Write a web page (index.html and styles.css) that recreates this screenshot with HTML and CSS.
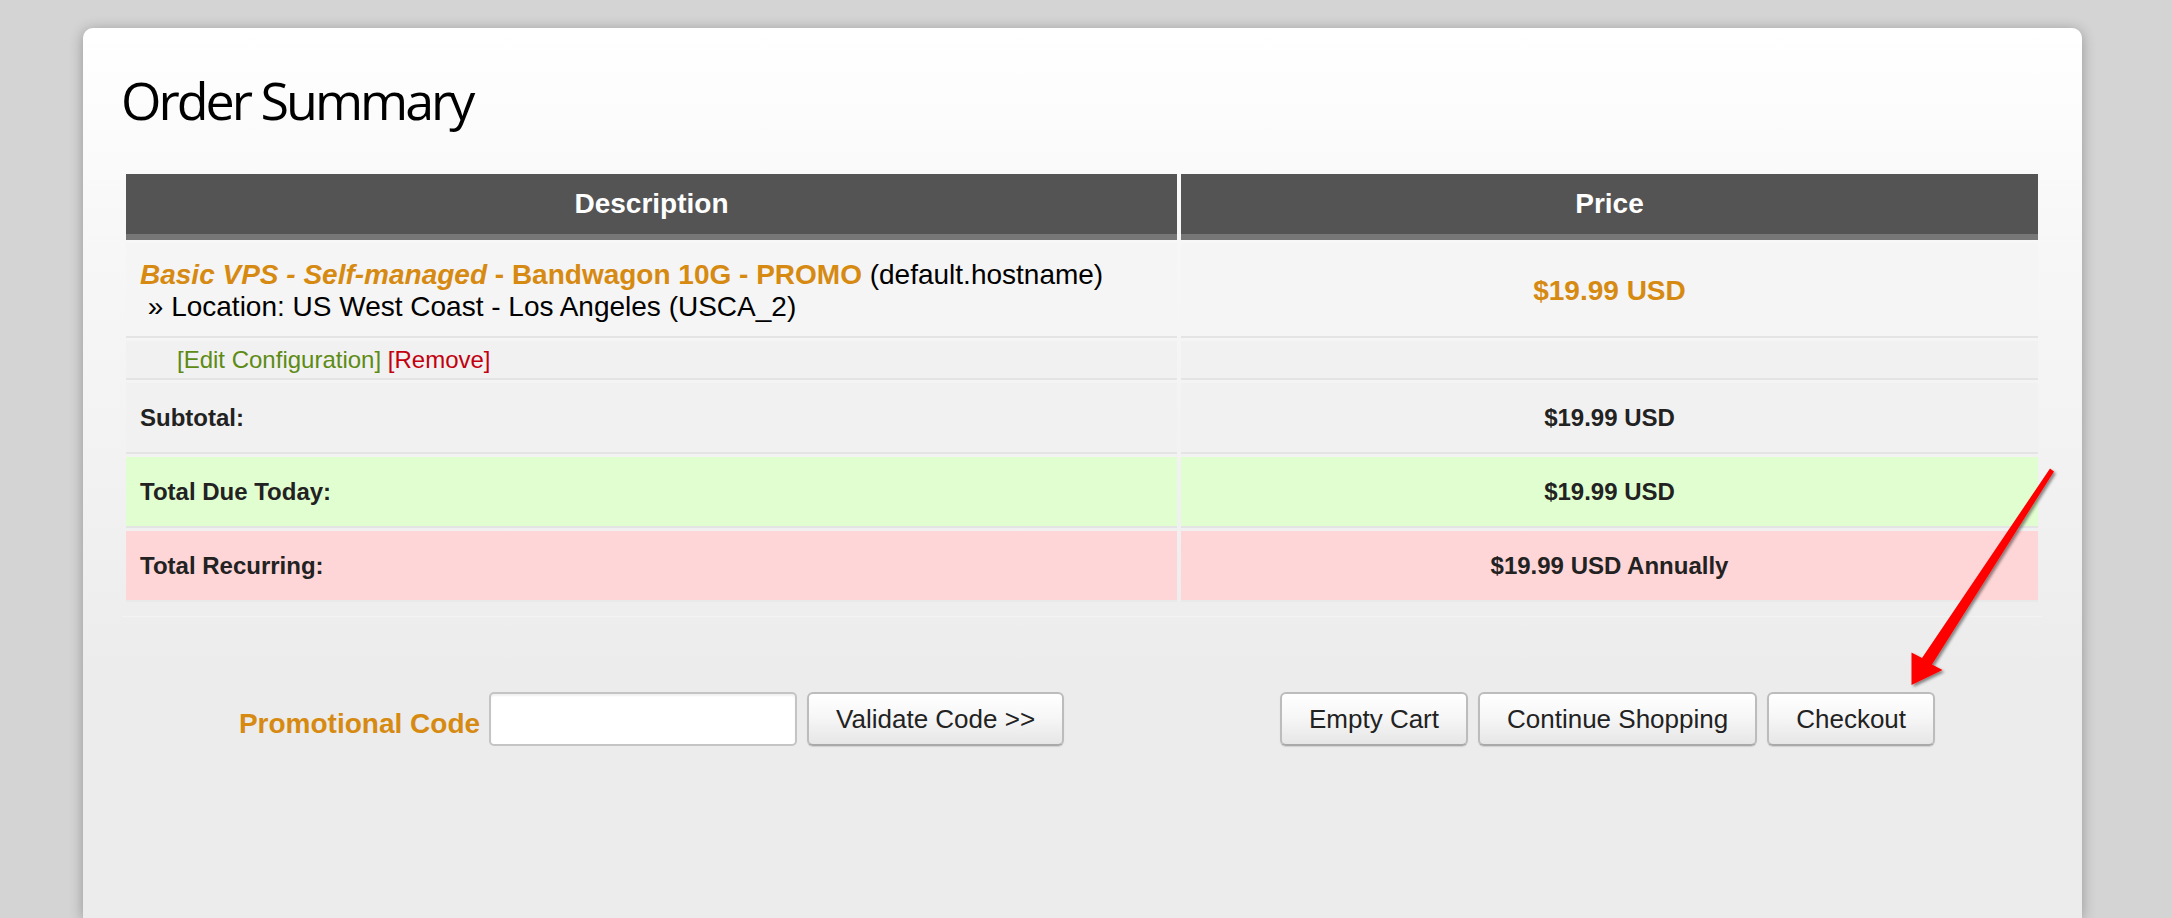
FILE: index.html
```html
<!DOCTYPE html>
<html lang="en">
<head>
<meta charset="utf-8">
<title>Order Summary</title>
<link rel="stylesheet" href="styles.css">
</head>
<body>
<div class="card">
  <h1 class="title">Order Summary</h1>
  <div class="summary">
    <table class="cart">
      <thead>
        <tr>
          <th class="col-desc">Description</th>
          <th class="col-price">Price</th>
        </tr>
      </thead>
      <tbody>
        <tr class="item">
          <td class="desc"><span class="pname"><em>Basic VPS - Self-managed</em> - Bandwagon 10G - PROMO</span> (default.hostname)<br>&nbsp;&raquo; Location: US West Coast - Los Angeles (USCA_2)</td>
          <td class="price">$19.99 USD</td>
        </tr>
        <tr class="actions">
          <td class="links"><a class="edit" href="#">[Edit Configuration]</a> <a class="remove" href="#">[Remove]</a></td>
          <td></td>
        </tr>
        <tr class="total subtotal">
          <td>Subtotal:</td>
          <td class="amount">$19.99 USD</td>
        </tr>
        <tr class="total due">
          <td>Total Due Today:</td>
          <td class="amount">$19.99 USD</td>
        </tr>
        <tr class="total recurring">
          <td>Total Recurring:</td>
          <td class="amount">$19.99 USD Annually</td>
        </tr>
      </tbody>
    </table>
  </div>
  <div class="controls">
    <div class="promo">
      <label class="promo-label" for="code">Promotional Code</label>
      <input class="promo-input" id="code" type="text">
      <button class="btn" type="button">Validate Code &gt;&gt;</button>
    </div>
    <div class="cart-buttons">
      <button class="btn" type="button">Empty Cart</button>
      <button class="btn" type="button">Continue Shopping</button>
      <button class="btn" type="button">Checkout</button>
    </div>
  </div>
</div>
<svg class="arrow" width="2172" height="918" viewBox="0 0 2172 918" aria-hidden="true">
  <defs>
    <filter id="shadow" x="-20%" y="-20%" width="140%" height="140%">
      <feDropShadow dx="2" dy="2" stdDeviation="1.6" flood-color="#000" flood-opacity="0.45"/>
    </filter>
  </defs>
  <polygon filter="url(#shadow)" fill="#ff0000" points="2054,471.5 1932,664.6 1942.5,670 1911.5,685 1911.5,652.5 1922,658 2050,468.5"/>
</svg>
</body>
</html>
```

FILE: styles.css
```css
html, body {
  margin: 0;
  padding: 0;
}

body {
  position: relative;
  width: 2172px;
  height: 918px;
  overflow: hidden;
  background: #d4d4d4;
  font-family: "Liberation Sans", Arial, Helvetica, sans-serif;
  color: #000;
}

.card {
  box-sizing: border-box;
  margin: 28px 0 0 83px;
  width: 1999px;
  height: 890px;
  padding: 42px 40px 0 39px;
  border-radius: 10px 10px 0 0;
  background: linear-gradient(to bottom, #ffffff 0px, #f7f7f7 220px, #f1f1f1 480px, #ececec 640px, #ececec 100%);
  box-shadow: 0 2px 14px rgba(0, 0, 0, 0.3);
}

.title {
  margin: 0 0 41px -1px;
  font-family: "Open Sans", "Noto Sans", sans-serif;
  font-weight: 400;
  font-size: 52px;
  line-height: 60px;
  letter-spacing: -3px;
  color: #000;
}

.summary {
  padding-bottom: 11px;
  border-bottom: 1px solid #f3f3f3;
}

.cart {
  width: 1920px;
  border-collapse: separate;
  border-spacing: 4px 3px;
  table-layout: fixed;
}

.cart th {
  height: 60px;
  padding: 0;
  background: #545454;
  border-bottom: 6px solid #777777;
  color: #fff;
  font-size: 28px;
  font-weight: bold;
  line-height: 60px;
  text-align: center;
}

.col-desc {
  width: 1051px;
}

.col-price {
  width: 857px;
}

.cart td {
  padding: 0 14px;
  border-bottom: 2px solid #e4e4e4;
  vertical-align: middle;
}

.item td {
  background: #f5f5f5;
  padding-top: 16px;
  padding-bottom: 13px;
  font-size: 28px;
  line-height: 32px;
}

.pname {
  color: #d68a12;
  font-weight: bold;
}

.pname em {
  font-style: italic;
}

.price {
  text-align: center;
  color: #d68a12;
  font-weight: bold;
}

.actions td {
  background: #f1f1f1;
  padding-top: 5px;
  padding-bottom: 5px;
  font-size: 24px;
  line-height: 27px;
}

.actions td.links {
  padding-left: 51px;
}

.links a {
  text-decoration: none;
}

.edit {
  color: #5d8b14;
}

.remove {
  color: #c2000e;
}

.total td {
  padding-top: 21px;
  padding-bottom: 21px;
  font-size: 24px;
  line-height: 27px;
  font-weight: bold;
  color: #222;
}

.subtotal td {
  background: #f1f1f1;
}

.due td {
  background: #e1fed0;
}

.recurring td {
  background: #ffd6d7;
  border-bottom-color: #e9e9e9;
}

.total td.amount {
  text-align: center;
}

.controls {
  display: grid;
  grid-template-columns: 1051px 857px;
  column-gap: 4px;
  padding: 0 4px;
  margin-top: 75px;
}

.promo,
.cart-buttons {
  display: flex;
  justify-content: center;
  align-items: center;
  gap: 10px;
}

.cart-buttons {
  margin-left: -4px;
}

.promo-label {
  align-self: flex-end;
  margin: 0 -1px 6px 0;
  color: #d68a12;
  font-size: 28px;
  font-weight: bold;
  line-height: 32px;
}

.promo-input {
  box-sizing: border-box;
  width: 308px;
  height: 54px;
  margin: 0;
  padding: 0 10px;
  border: 2px solid #c4c4c4;
  border-radius: 5px;
  background: #fff;
  box-shadow: inset 0 2px 2px rgba(0, 0, 0, 0.06);
  font-family: "Liberation Sans", Arial, sans-serif;
  font-size: 26px;
}

.btn {
  box-sizing: border-box;
  height: 54px;
  margin: 0;
  padding: 0 27px;
  border: 2px solid #bcbcbc;
  border-bottom-color: #a9a9a9;
  border-radius: 6px;
  background: linear-gradient(to bottom, #ffffff 0%, #f7f7f7 45%, #e6e6e6 100%);
  box-shadow: 0 1px 1px rgba(0, 0, 0, 0.12);
  color: #222;
  font-family: "Liberation Sans", Arial, sans-serif;
  font-size: 26px;
  line-height: 50px;
  white-space: nowrap;
}

.arrow {
  position: absolute;
  left: 0;
  top: 0;
  pointer-events: none;
}
```
